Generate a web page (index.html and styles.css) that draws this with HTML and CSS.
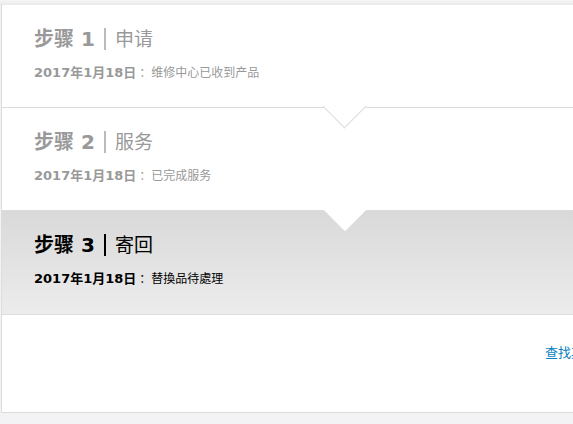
FILE: index.html
```html
<!DOCTYPE html>
<html lang="zh-CN">
<head>
    <meta charset="UTF-8">
    <title>维修进度</title>
    <link rel="stylesheet" href="styles.css">
</head>
<body>
    <div class="steps">
        <!-- 步骤 1 -->
        <div class="step">
            <h2 class="step-title"><span class="step-no">步骤 1</span><span class="step-name">申请</span></h2>
            <p class="step-info"><b>2017年1月18日</b>：维修中心已收到产品</p>
        </div>
        <!-- 步骤 2 -->
        <div class="step notch">
            <h2 class="step-title"><span class="step-no">步骤 2</span><span class="step-name">服务</span></h2>
            <p class="step-info"><b>2017年1月18日</b>：已完成服务</p>
        </div>
        <!-- 步骤 3 -->
        <div class="step current">
            <h2 class="step-title"><span class="step-no">步骤 3</span><span class="step-name">寄回</span></h2>
            <p class="step-info"><b>2017年1月18日</b>：替換品待處理</p>
        </div>
        <div class="more">
            <a href="#">查找其他维修</a>
        </div>
    </div>
</body>
</html>
```

FILE: styles.css
```css
body {
    margin: 0;
    overflow: hidden;
    height: 424px;
    background: linear-gradient(#f6f6f6, #e9e9e9 5px, #f3f3f5 6px);
    font-family: "DejaVu Sans", "Noto Sans CJK SC", sans-serif;
}
.steps {
    width: 700px;
    margin-top: 5px;
    margin-left: 1px;
    border-left: 1px solid #dcdcdc;
    border-bottom: 1px solid #dcdcdc;
    background: #fff;
}
.step {
    position: relative;
    height: 103px;
    padding-left: 32px;
    padding-top: 21px;
    box-sizing: border-box;
    border-bottom: 1px solid #dcdcdc;
    color: #999;
}
.step.current {
    height: 104px;
    background: linear-gradient(#d9d9d9, #ececec);
    color: #000;
}
.notch::before,
.current::before {
    content: "";
    position: absolute;
    left: 327px;
    width: 30px;
    height: 30px;
    background: #fff;
    transform: rotate(45deg);
}
.notch::before {
    top: -17px;
    border-right: 1px solid #dcdcdc;
    border-bottom: 1px solid #dcdcdc;
}
.current::before {
    top: -16px;
    left: 328px;
}
.step-title {
    margin: 0;
    font-size: 20px;
    font-weight: normal;
    line-height: 26px;
    display: flex;
    align-items: center;
}
.step-no {
    font-weight: bold;
    padding-right: 9px;
    border-right: 2px solid #bbb;
    line-height: 22px;
}
.current .step-no {
    border-right-color: #000;
}
.step-name {
    padding-left: 9px;
    font-size: 19px;
}
.step-info {
    margin: 13px 0 0;
    font-size: 12px;
    line-height: 16px;
}
.step-info b {
    font-size: 13px;
    margin-right: 3px;
}
.more {
    height: 97px;
    padding-left: 543px;
    padding-top: 27px;
    box-sizing: border-box;
    font-size: 13px;
}
.more a {
    color: #0a7fc1;
    text-decoration: none;
}
```
